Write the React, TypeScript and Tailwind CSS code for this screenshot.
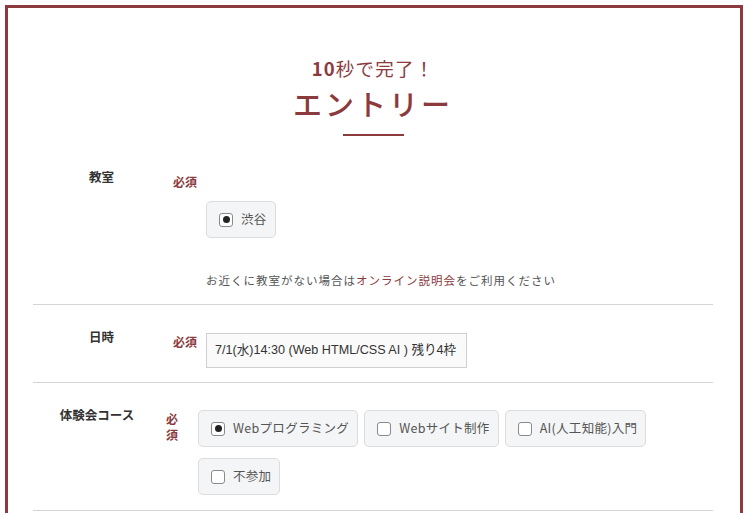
import React from "react";

const jp = { fontFamily: '"Noto Sans CJK JP", "Noto Sans", sans-serif' };

function RadioMark({ on }: { on: boolean }) {
  return (
    <span className="flex h-[14px] w-[14px] shrink-0 items-center justify-center rounded-[3px] border-[1.5px] border-[#8a8a8a] bg-white">
      {on && <span className="h-[7px] w-[7px] rounded-full bg-[#222]" />}
    </span>
  );
}

function Option({ label, on }: { label: string; on?: boolean }) {
  return (
    <label className="flex h-[37px] items-center gap-[8px] rounded-[5px] border border-[#dcdcdc] bg-[#f4f5f6] pl-[12px] pr-[8px] text-[12.5px] tracking-[0.3px] text-[#555]">
      <RadioMark on={!!on} />
      <span>{label}</span>
    </label>
  );
}

function Required({ className = "" }: { className?: string }) {
  return <span className={"text-[12px] font-bold text-[#8b3a3e] " + className}>必須</span>;
}

export default function App() {
  return (
    <div className="min-h-[513px] bg-white pt-[5px]" style={jp}>
      <div className="ml-[5px] h-[520px] w-[738px] border-[3px] border-b-0 border-[#8b3a3e] pl-[25px] pr-[27px] pt-[51px]">
        <div className="flex flex-col items-center text-[#8b3a3e]">
          <p className="text-[18.5px] leading-[19px] tracking-[1.2px]">
            <span className="font-bold">10</span>秒で完了！
          </p>
          <h1 className="mt-[8px] text-[29px] font-medium leading-[34px] tracking-[3px]">エントリー</h1>
          <div className="mt-[14px] h-[2px] w-[61px] bg-[#8b3a3e]" />
        </div>

        {/* 教室 */}
        <div className="mt-[31px] flex border-b border-[#d4d4d4] pb-[14px]">
          <div className="w-[137px] text-center text-[12.5px] font-bold leading-[20px] text-[#333]">教室</div>
          <div className="w-[36px] pl-[3px] leading-[20px]">
            <Required className="relative top-[3px]" />
          </div>
          <div className="flex flex-col">
            <div className="mt-[34px] flex">
              <Option label="渋谷" on />
            </div>
            <p className="mt-[32px] text-[11.5px] leading-[20px] tracking-[1px] text-[#555]">
              お近くに教室がない場合は<span className="text-[#8b3a3e]">オンライン説明会</span>をご利用ください
            </p>
          </div>
        </div>

        {/* 日時 */}
        <div className="flex border-b border-[#d4d4d4] pb-[14px] pt-[22px]">
          <div className="w-[137px] text-center text-[12.5px] font-bold leading-[20px] text-[#333]">日時</div>
          <div className="w-[36px] pl-[3px] leading-[20px]">
            <Required className="relative top-[3px]" />
          </div>
          <div className="mt-[6px] flex h-[35px] w-[261px] items-center whitespace-nowrap border border-[#cfcfcf] bg-[#fafafa] pl-[8px] text-[12.6px] text-[#333]" style={{ fontFamily: '"Liberation Sans", "Noto Sans CJK JP", sans-serif' }}>
            7/1(水)14:30 (Web HTML/CSS AI ) 残り4枠
          </div>
        </div>

        {/* 体験会コース */}
        <div className="flex border-b border-[#d4d4d4] pb-[15px] pt-[22px]">
          <div className="w-[128px] shrink-0 text-center text-[12.5px] font-bold leading-[20px] text-[#333]">体験会コース</div>
          <div className="w-[37px] shrink-0 pl-[5px] pt-[6px]">
            <Required className="block w-[13px] leading-[16px]" />
          </div>
          <div className="mt-[5px] flex flex-wrap gap-x-[6px] gap-y-[11px]">
            <Option label="Webプログラミング" on />
            <Option label="Webサイト制作" />
            <Option label="AI(人工知能)入門" />
            <Option label="不参加" />
          </div>
        </div>
      </div>
    </div>
  );
}
